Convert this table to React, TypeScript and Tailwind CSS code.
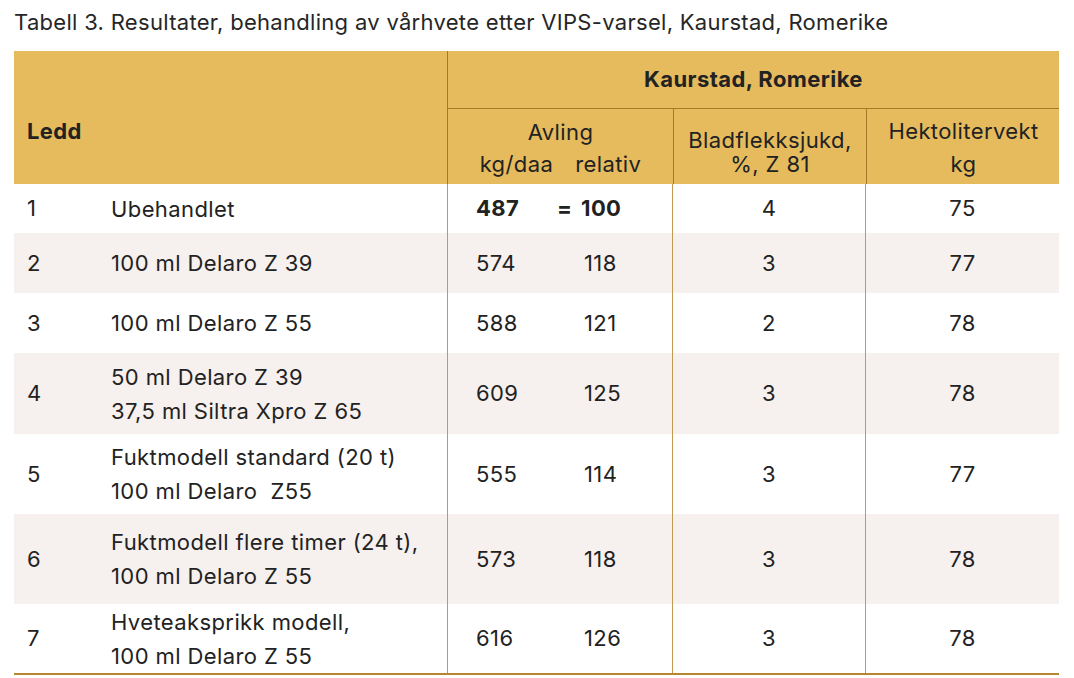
const rows = [
  { n: "1", desc: ["Ubehandlet"], kg: "487", rel: "100", blad: "4", hl: "75", h: "h-[49px]", bold: true },
  { n: "2", desc: ["100 ml Delaro Z 39"], kg: "574", rel: "118", blad: "3", hl: "77", h: "h-[60px]", shade: true },
  { n: "3", desc: ["100 ml Delaro Z 55"], kg: "588", rel: "121", blad: "2", hl: "78", h: "h-[60px]" },
  { n: "4", desc: ["50 ml Delaro Z 39", "37,5 ml Siltra Xpro Z 65"], kg: "609", rel: "125", blad: "3", hl: "78", h: "h-[81px]", shade: true },
  { n: "5", desc: ["Fuktmodell standard (20 t)", "100 ml Delaro  Z55"], kg: "555", rel: "114", blad: "3", hl: "77", h: "h-[80px]" },
  { n: "6", desc: ["Fuktmodell flere timer (24 t),", "100 ml Delaro Z 55"], kg: "573", rel: "118", blad: "3", hl: "78", h: "h-[90px]", shade: true },
  { n: "7", desc: ["Hveteaksprikk modell,", "100 ml Delaro Z 55"], kg: "616", rel: "126", blad: "3", hl: "78", h: "h-[69px]" },
];

export default function App() {
  return (
    <div className="h-[678px] w-[1074px] bg-white px-[14px] pt-[9px] font-['Inter',sans-serif] text-[22px] tracking-[0.4px] text-[#222]">
      <h1 className="h-[42px] text-[22px] leading-[26px] tracking-[0.3px] text-[#262626]">
        Tabell 3. Resultater, behandling av vårhvete etter VIPS-varsel, Kaurstad, Romerike
      </h1>

      <div className="w-[1045px] border-b-2 border-[#b8862e]">
        {/* header */}
        <div className="grid grid-cols-[433px_612px] bg-[#e5bb5e]">
          <div className="flex h-[133px] items-center pl-[13px] pt-[27px] font-bold">Ledd</div>
          <div className="border-l border-[#a97a26]">
            <div className="flex h-[58px] items-center justify-center border-b border-[#a97a26] font-bold">
              Kaurstad, Romerike
            </div>
            <div className="grid h-[75px] grid-cols-[225px_193px_194px]">
              <div className="flex flex-col items-center justify-center pt-[2px] leading-[32px]">
                <span>Avling</span>
                <span className="flex gap-[22px]">
                  <span>kg/daa</span>
                  <span>relativ</span>
                </span>
              </div>
              <div className="flex flex-col items-center justify-center border-l border-[#a97a26] pt-[10px] leading-[24px]">
                <span>Bladflekksjukd,</span>
                <span>%, Z 81</span>
              </div>
              <div className="flex flex-col items-center justify-center border-l border-[#a97a26] pt-[2px] leading-[33px]">
                <span>Hektolitervekt</span>
                <span>kg</span>
              </div>
            </div>
          </div>
        </div>

        {/* body */}
        {rows.map((r) => (
          <div
            key={r.n}
            className={`grid grid-cols-[97px_336px_225px_193px_194px] ${r.h} ${r.shade ? "bg-[#f6f0ee]" : "bg-white"}`}
          >
            <div className="flex items-center pl-[13px]">{r.n}</div>
            <div className="flex flex-col justify-center leading-[34px]">
              {r.desc.map((d) => (
                <span key={d} className="whitespace-pre">{d}</span>
              ))}
            </div>
            <div className={`flex items-center border-l border-[#c39a50] ${r.bold ? "font-bold" : ""}`}>
              <span className="w-[136px] pl-[28px]">{r.kg}</span>
              {r.bold && <span className="-ml-[27px] w-[24px]">=</span>}
              <span>{r.rel}</span>
            </div>
            <div className="flex items-center justify-center border-l border-[#c39a50]">{r.blad}</div>
            <div className="flex items-center justify-center border-l border-[#c39a50]">{r.hl}</div>
          </div>
        ))}
      </div>
    </div>
  );
}
